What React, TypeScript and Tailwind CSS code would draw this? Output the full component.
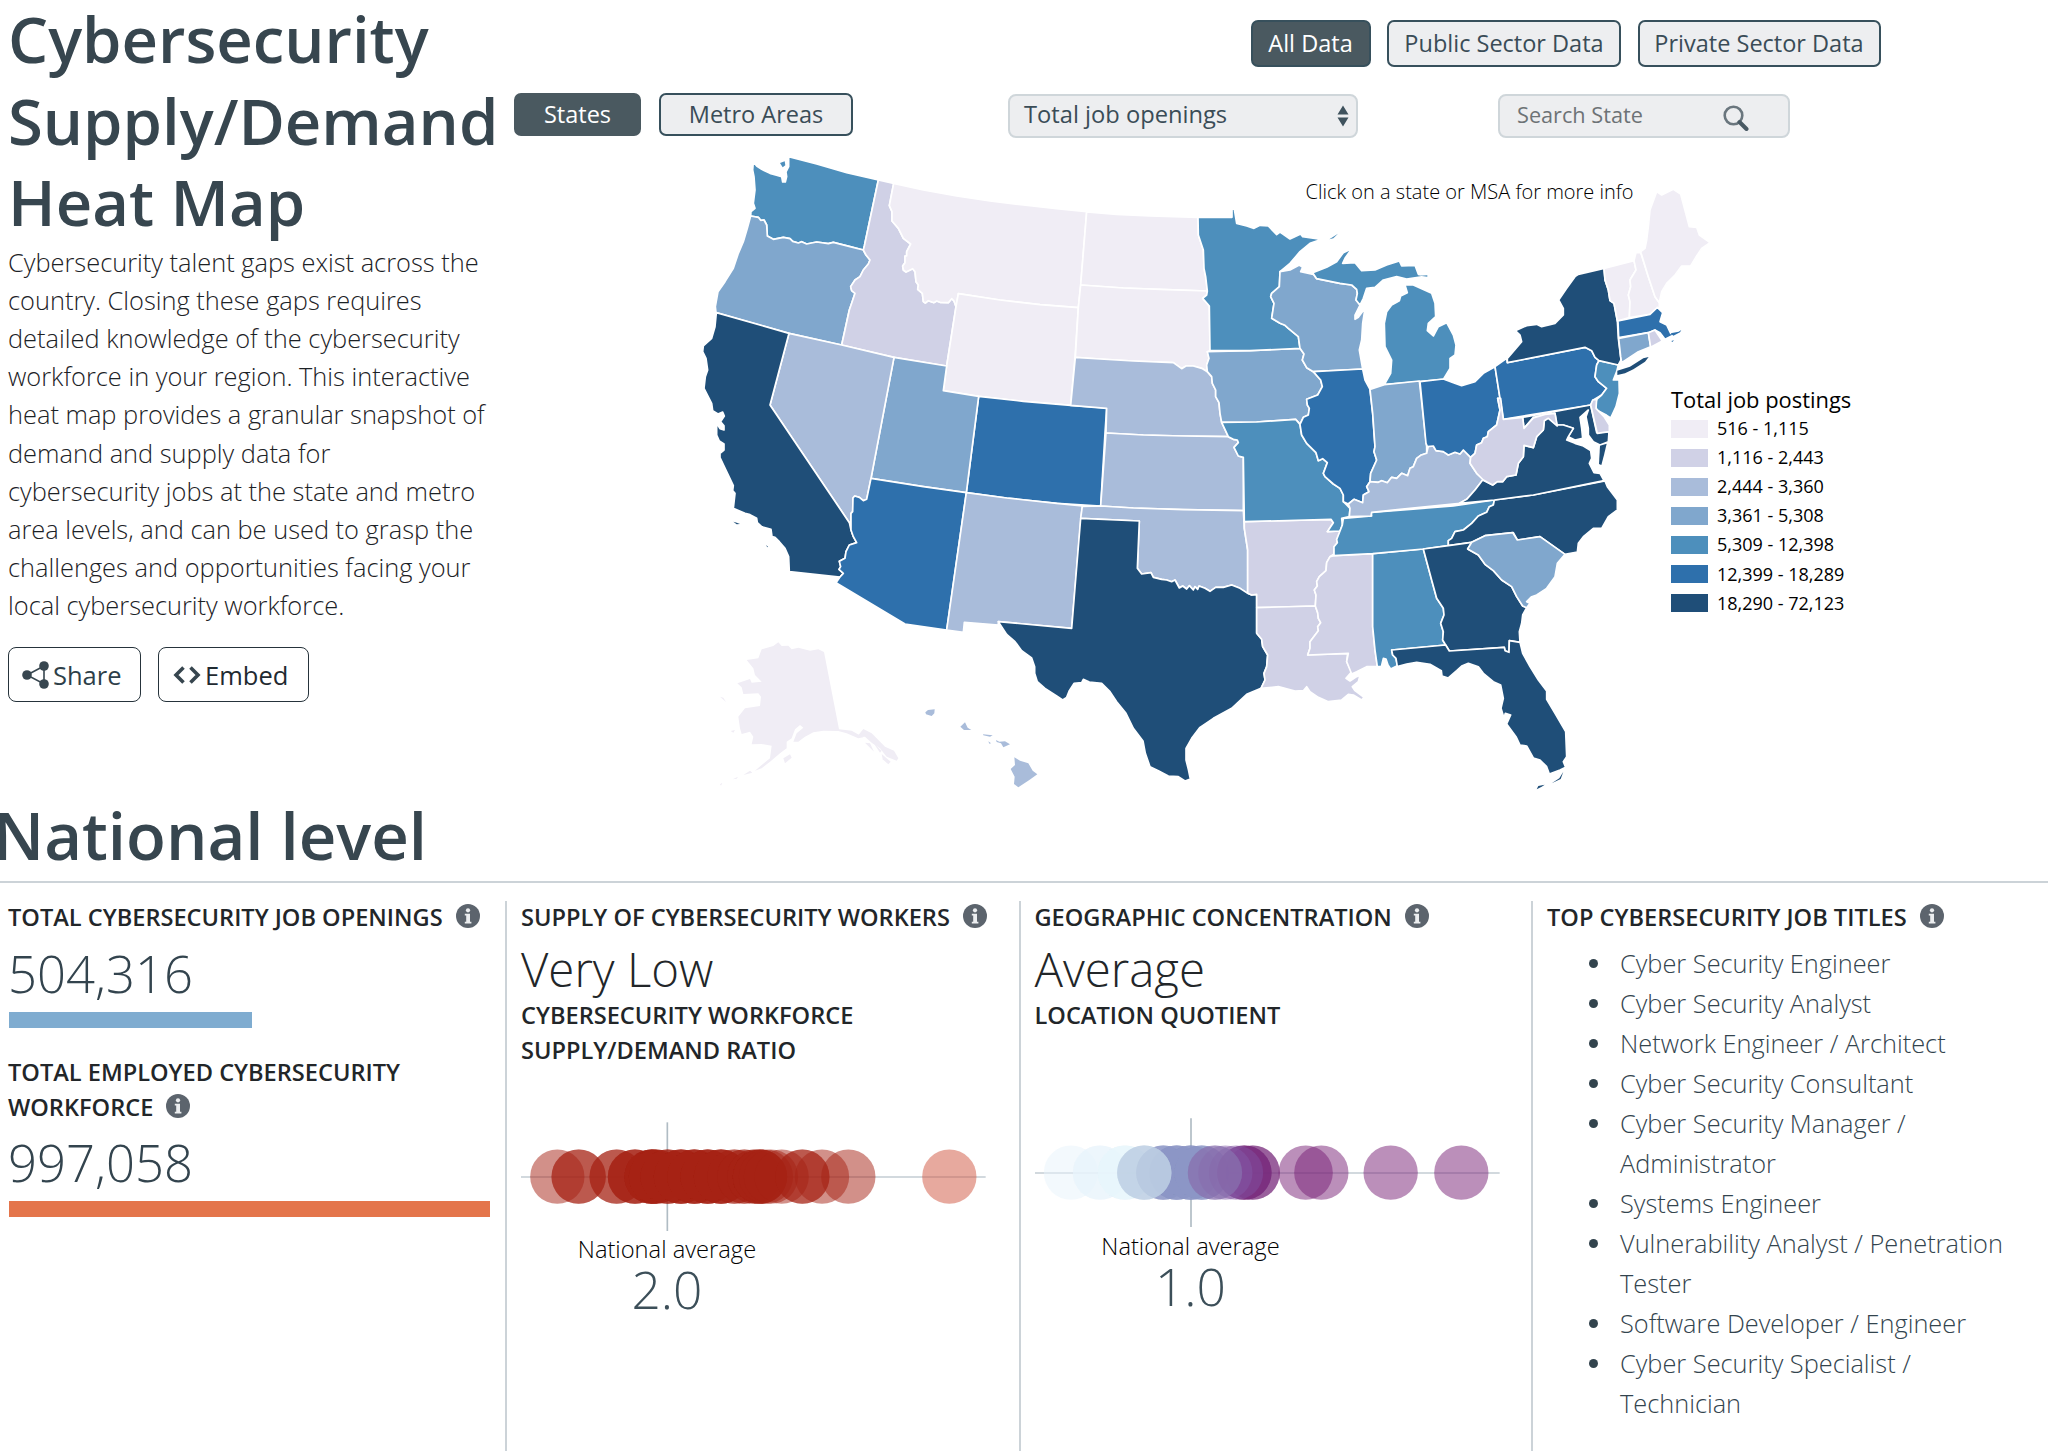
import React from "react";

const C = ["#f0edf5", "#d0d1e6", "#a9bcda", "#80a7cd", "#4d8fbc", "#2e70ac", "#1f4e78"];

type Shape = [level: number, points: string];

/* Shapes are grouped by map region; each region has its own local origin. */
const WEST: Shape[] = [
  [4, "190,66 200,78 215,88 240,100 262,106 275,110 278,126 286,126 290,110 288,96 296,80 296,50 380,72 470,98 565,120 523,318 520,330 480,320 430,307 415,311 380,306 350,312 335,305 325,309 308,304 300,296 280,292 250,298 232,288 230,255 222,240 212,241 205,232 182,228 183,215 195,205 190,190 195,150 192,110 188,90"],
  [3, "182,228 205,232 212,241 222,240 230,255 232,288 250,298 280,292 300,296 308,304 325,309 335,305 350,312 380,306 415,311 430,307 480,320 520,330 528,345 540,360 535,372 520,390 510,410 495,420 482,440 485,452 495,460 485,490 478,510 455,615 297,580 78,518 76,500 84,455 105,425 130,385 145,340 160,305 172,265"],
  [1, "565,120 611,130 598,197 606,215 606,243 625,265 640,295 662,312 650,335 650,348 645,348 645,368 638,378 640,390 648,396 668,386 675,395 678,425 685,435 683,448 697,460 700,485 706,489 715,482 732,488 740,483 750,487 775,488 785,476 792,483 798,500 770,678 612,652 455,615 478,510 485,490 495,460 485,452 482,440 495,420 510,410 520,390 535,372 540,360 528,345 520,330 523,318"],
  [0, "611,130 700,150 800,168 900,183 1000,195 1100,206 1190,215 1172,436 1165,503 1050,494 930,480 805,461 798,500 792,483 785,476 775,488 750,487 740,483 732,488 715,482 706,489 700,485 697,460 683,448 685,435 678,425 675,395 668,386 648,396 640,390 638,378 645,368 645,348 650,348 650,335 662,312 640,295 625,265 606,243 606,215 598,197"],
  [0, "805,461 930,480 1050,494 1165,503 1155,653 1142,796 1000,784 866,769 760,752 770,678 798,500"],
  [5, "866,769 1000,784 1142,796 1250,804 1245,879 1232,1098 1100,1090 950,1074 829,1058"],
  [3, "612,652 770,678 760,752 866,769 829,1058 700,1040 543,1015"],
  [2, "297,580 455,615 612,652 543,1015 530,1078 520,1082 508,1072 494,1068 489,1074 488,1115 483,1120 483,1145 478,1148 240,795"],
  [6, "79,518 297,580 240,795 478,1148 483,1170 490,1190 500,1208 478,1215 468,1235 465,1255 448,1264 452,1280 447,1288 460,1300 450,1311 298,1295 296,1250 285,1225 268,1205 255,1192 246,1190 243,1168 215,1160 202,1148 200,1135 180,1124 165,1120 130,1105 135,1060 128,1052 130,1037 110,995 90,953 90,940 102,930 102,912 88,903 80,885 80,850 90,866 102,870 102,857 92,845 103,828 98,816 84,822 68,812 65,790 42,745 46,710 53,690 48,655 38,635 40,618 65,595 75,560"],
  [5, "543,1015 700,1040 829,1058 770,1470 645,1452 438,1328 450,1311 460,1300 447,1288 452,1280 448,1264 465,1255 468,1235 478,1215 500,1208 490,1190 483,1170 483,1120 488,1115 489,1074 494,1068 508,1072 520,1082 530,1078"],
  [2, "829,1058 950,1074 1100,1090 1177,1098 1173,1135 1145,1465 925,1445 925,1455 823,1447 820,1477 770,1470"],
];

const CENTRAL: Shape[] = [
  [0, "110,96 200,103 300,108 444,112 445,165 455,195 460,210 462,265 467,290 472,333 350,329 220,324 92,315"],
  [0, "92,315 220,324 350,329 472,333 470,345 458,355 478,378 480,512 472,515 477,535 470,555 472,575 455,565 430,558 408,558 395,566 370,548 250,543 150,537 76,532 85,383"],
  [2, "76,532 150,537 250,543 370,548 395,566 408,558 430,558 455,565 472,575 485,590 487,610 497,630 497,650 507,668 510,700 515,727 535,770 400,768 280,765 168,759 170,685 62,676"],
  [2, "168,759 280,765 400,768 535,770 550,778 562,780 565,788 552,802 565,828 580,832 580,992 400,989 250,984 152,978"],
  [2, "97,979 152,978 250,984 400,989 580,992 583,1045 593,1110 593,1240 570,1225 545,1215 520,1222 497,1222 480,1234 465,1225 447,1218 443,1228 435,1220 430,1230 418,1217 410,1227 398,1218 388,1224 375,1200 365,1205 350,1200 335,1198 310,1192 303,1178 275,1182 262,1165 268,1023 92,1015"],
  [6, "92,1015 268,1023 262,1165 275,1182 303,1178 310,1192 335,1198 350,1200 365,1205 375,1200 388,1224 398,1218 410,1227 418,1217 430,1230 435,1220 443,1228 447,1218 465,1225 480,1234 497,1222 520,1222 545,1215 570,1225 593,1240 605,1245 620,1243 620,1360 635,1378 638,1400 653,1425 650,1460 642,1480 645,1500 633,1525 590,1543 545,1585 490,1615 450,1642 425,1675 408,1705 408,1740 415,1768 421,1797 405,1803 385,1790 355,1788 325,1772 300,1760 286,1720 279,1683 250,1645 228,1600 200,1565 180,1535 155,1510 118,1506 100,1498 95,1508 72,1510 58,1532 50,1552 38,1560 20,1548 -15,1525 -38,1505 -46,1480 -46,1460 -55,1434 -85,1412 -105,1385 -130,1363 -155,1325 65,1345"],
  [1, "583,1025 700,1022 843,1018 850,1028 832,1055 870,1053 868,1072 860,1078 862,1088 852,1100 852,1122 840,1130 830,1148 828,1172 808,1190 800,1205 802,1218 793,1230 798,1245 796,1278 620,1283 620,1243 605,1245 593,1240 593,1110 583,1045"],
  [1, "620,1283 796,1278 803,1298 805,1315 812,1328 803,1340 805,1352 780,1385 780,1405 773,1425 893,1420 890,1445 905,1475 888,1495 900,1503 920,1490 930,1486 925,1505 907,1520 915,1532 942,1552 935,1560 910,1545 895,1543 875,1560 835,1565 805,1552 780,1535 770,1520 760,1532 735,1533 685,1520 633,1525 645,1500 642,1480 650,1460 653,1425 638,1400 635,1378 620,1360"],
  [3, "472,515 600,512 750,505 762,522 757,540 770,563 790,575 812,600 817,620 803,645 770,658 772,675 778,685 775,705 760,712 750,733 737,718 620,726 515,727 510,700 507,668 497,650 497,630 487,610 485,590 472,575 470,555 477,535"],
  [4, "515,727 620,726 737,718 750,733 755,765 770,790 798,818 805,842 818,836 832,848 820,880 825,890 850,912 870,925 880,945 880,965 890,975 900,985 898,1010 875,1015 877,1035 870,1053 832,1055 850,1028 843,1018 583,1025 580,832 565,828 552,802 565,788 562,780 550,778 535,770"],
  [4, "444,112 546,112 546,86 553,88 560,130 590,138 612,145 630,136 655,138 680,164 690,156 720,177 752,162 758,170 815,178 780,190 750,215 720,250 690,275 688,320 665,340 662,350 672,370 665,415 690,430 705,436 715,445 745,470 750,505 600,512 480,512 478,378 458,355 470,345 472,333 467,290 462,265 460,210 455,195 445,165"],
  [3, "690,275 720,270 748,255 758,262 752,275 790,283 800,296 870,310 905,315 920,328 922,340 918,360 930,375 915,405 915,418 925,412 945,385 938,430 935,480 928,510 938,567 790,575 770,563 757,540 762,522 750,505 745,470 715,445 705,436 690,430 665,415 672,370 662,350 665,340 688,320"],
  [4, "788,278 830,262 860,245 880,218 905,206 885,235 878,250 915,248 935,272 975,270 1010,255 1048,243 1055,258 1095,256 1105,283 1130,288 1070,297 1040,290 1000,300 975,322 950,325 940,355 930,375 918,360 922,340 920,328 905,315 870,310 800,296"],
  [4, "1065,315 1090,315 1145,340 1155,370 1157,410 1135,430 1132,452 1150,468 1165,440 1190,428 1210,465 1218,495 1215,525 1200,535 1200,565 1180,598 1108,605 1003,614 1022,580 1025,540 1005,500 1003,430 1010,395 1025,375 1048,362 1052,348 1072,338"],
  [5, "790,575 938,567 945,600 960,628 968,700 975,800 972,815 980,840 962,880 960,905 950,920 957,935 940,945 938,968 912,958 895,972 880,965 880,945 870,925 850,912 825,890 820,880 832,848 818,836 805,842 798,818 770,790 755,765 750,733 760,712 775,705 778,685 772,675 770,658 803,645 817,620 812,600"],
  [3, "960,628 1003,614 1108,603 1130,800 1130,820 1112,826 1100,835 1090,860 1080,865 1073,887 1055,880 1040,895 1025,892 1012,908 995,902 985,907 960,905 962,880 980,840 972,815 975,800 968,700"],
];

const EAST: Shape[] = [
  [2, "-152,1010 -150,985 -155,972 -138,958 -112,968 -110,945 -93,935 -100,920 -90,905 -65,907 -55,902 -38,908 -25,892 -10,895 5,880 23,887 30,865 40,860 50,835 62,826 80,820 85,798 100,798 108,812 130,815 145,825 165,817 180,822 190,810 212,832 210,850 230,880 250,898 225,930 200,958 180,970 0,988 -85,997 -87,1008"],
  [5, "60,605 130,597 160,608 185,617 225,605 250,580 285,560 300,655 293,655 300,690 290,735 265,755 262,770 250,775 245,788 230,795 225,820 212,832 190,810 180,822 165,817 145,825 130,815 108,812 100,798 82,800 78,790"],
  [5, "285,560 320,535 322,548 555,502 575,512 585,532 597,542 590,555 585,590 595,605 620,625 605,645 580,660 572,675 310,718"],
  [4, "597,542 655,555 650,575 640,600 657,600 658,640 648,680 632,714 620,706 590,690 586,675 590,658 605,645 620,625 595,605 585,590 590,555"],
  [6, "322,535 365,485 360,465 346,452 380,437 410,433 425,440 465,430 490,405 490,385 476,360 500,325 525,290 535,283 612,265 615,300 625,330 630,362 642,370 652,422 655,475 663,540 655,555 597,542 585,532 575,512 555,502 322,548"],
  [0, "612,265 702,242 708,270 690,300 692,320 685,345 690,365 688,413 652,423 642,370 630,362 625,330 615,300"],
  [0, "702,242 708,218 722,218 745,290 765,350 778,368 778,382 768,390 750,403 688,413 690,365 685,345 692,320 690,300 708,270"],
  [0, "722,215 735,205 740,180 745,140 750,90 770,35 785,45 820,28 842,42 868,140 890,142 898,165 930,188 905,205 890,228 872,258 845,258 825,285 800,310 785,335 778,368 765,350 745,290"],
  [5, "654,423 750,403 772,382 788,398 780,425 800,435 812,460 835,458 815,468 795,478 780,458 765,450 745,458 656,473"],
  [3, "656,475 745,458 752,500 715,515 665,548 662,530"],
  [1, "745,458 765,450 787,483 752,502"],
  [6, "368,712 572,675 590,758 627,755 625,785 600,795 580,785 565,765 565,745 558,710 565,690 540,712 545,745 548,775 525,780 505,770 520,745 490,735 470,735 465,700 435,705 400,712 372,745"],
  [1, "572,675 578,660 590,658 588,685 612,710 628,735 628,755 592,760"],
  [6, "178,970 283,960 400,945 612,902 600,880 582,878 568,850 575,835 572,812 550,798 525,790 500,780 505,770 520,745 490,735 470,735 445,712 433,722 430,750 410,770 400,803 372,796 370,830 355,850 348,885 320,890 308,905 292,905 278,915 248,900 225,930 200,958"],
  [1, "293,655 302,655 310,718 368,712 372,745 400,714 435,703 465,700 472,738 445,715 433,722 430,750 410,770 400,803 372,796 370,830 355,850 348,885 320,890 308,905 292,905 278,915 250,900 230,880 210,850 212,832 225,820 230,795 245,788 250,775 262,770 265,755 290,735 300,690"],
];

const SOUTH: Shape[] = [
  [1, "552,227 668,221 668,440 675,510 682,560 650,560 620,575 605,582 590,545 595,520 473,525 480,505 480,485 505,452 503,440 512,428 505,415 503,398 496,378 498,345 493,330 502,318 500,305 508,290 528,272 530,248 540,230"],
  [4, "668,221 820,207 845,300 860,355 880,385 882,405 872,430 880,455 878,480 887,495 725,510 728,525 738,535 742,557 722,567 714,555 708,537 700,535 694,560 682,560 675,510 668,440"],
  [4, "580,115 665,108 663,97 780,88 910,78 1033,60 1030,75 1018,80 1010,97 985,108 965,130 940,150 915,155 905,175 895,182 895,197 820,207 668,221 552,227 552,200 562,188 560,178 570,153 577,135"],
  [6, "1033,60 1150,45 1365,3 1372,20 1402,60 1402,90 1375,110 1355,145 1330,145 1300,170 1285,190 1282,216 1245,223 1170,170 1102,180 1090,158 1005,167 965,187 895,197 895,182 905,175 915,155 940,150 965,130 985,108 1010,97 1018,80 1030,75"],
  [6, "820,207 895,197 965,187 953,207 985,225 1005,253 1030,272 1055,300 1085,320 1100,350 1118,378 1130,383 1118,405 1115,430 1108,455 1110,487 1078,482 1077,517 1065,512 1063,502 898,513 887,495 878,480 880,455 872,430 882,405 880,385 860,355 845,300"],
  [3, "965,187 1005,167 1088,158 1102,180 1170,170 1245,223 1222,250 1215,290 1190,325 1160,345 1145,350 1130,365 1140,370 1130,383 1118,378 1100,350 1085,320 1055,300 1030,272 1005,253 985,225 953,207"],
  [6, "725,510 887,495 898,513 1063,502 1065,512 1077,517 1078,482 1110,487 1118,520 1140,560 1165,600 1190,633 1190,658 1215,700 1247,755 1250,830 1240,845 1247,862 1230,870 1198,882 1190,860 1170,840 1150,834 1130,798 1110,795 1098,770 1070,732 1082,705 1066,700 1062,714 1053,685 1060,655 1052,615 1030,605 1000,580 985,560 955,550 935,558 920,572 895,594 876,588 874,572 840,553 800,547 770,552 742,560 738,535 728,525"],
];

/* Islands and detached territory, drawn without a border. */
const ISLES: { at: string; shapes: Shape[] }[] = [
  {
    at: "translate(0 1380)",
    shapes: [
      [0, "170,180 205,175 215,148 250,138 265,127 275,138 295,137 305,148 325,143 360,152 385,148 402,156 447,388 485,392 520,412 505,415 470,400 445,393 400,392 370,397 345,410 325,425 310,425 320,400 340,383 330,375 315,388 305,415 290,425 290,445 270,460 240,485 215,505 195,512 215,495 240,475 245,437 215,432 185,433 190,410 180,395 155,402 150,385 145,350 165,325 210,318 213,290 205,280 160,282 155,262 142,250 180,237 185,248 215,245 195,225 190,205"],
      [0, "280,475 300,463 305,473 285,490"],
      [0, "500,412 520,387 545,400 585,440 612,452 625,475 620,482 590,470 570,445 545,428 525,410"],
      [0, "525,428 540,430 552,455"],
      [0, "550,428 575,452 570,458"],
      [0, "575,462 602,485 595,493 578,478"],
      [0, "160,525 180,512 187,518"],
      [0, "90,553 97,548 93,557"],
      [0, "128,538 144,530 140,536"],
      [0, "122,393 135,390 130,398"],
      [0, "90,290 100,293 108,306"],
      [2, "706,337 714,330 734,328 733,340 725,348 708,343"],
      [2, "811,380 825,367 833,383 844,390 822,390"],
      [2, "879,403 908,406 900,410 880,406"],
      [2, "895,424 903,430 898,431"],
      [2, "918,420 928,425 945,424 960,433 940,442 933,430 920,426"],
      [2, "973,472 990,482 1015,490 1028,512 1042,523 1018,540 985,562 972,552 974,530 962,507 975,495"],
      [6, "130,-235 140,-232 150,-228 140,-227"],
      [6, "228,-165 234,-160 232,-158"],
      [4, "270,-1311 284,-1316 286,-1304 278,-1298"],
    ],
  },
  {
    at: "translate(2130 120)",
    shapes: [
      [6, "652,572 690,560 730,535 746,531 735,545 700,568 675,580 652,585"],
      [6, "600,797 620,791 612,825 604,855 597,852"],
      [5, "812,460 836,455 844,450 840,457 820,467"],
      [5, "814,483 822,481 817,486"],
      [4, "60,287 82,286 82,290"],
    ],
  },
  {
    at: "translate(1080 120)",
    shapes: [[4, "838,178 864,161 850,175"]],
  },
  {
    at: "translate(1380 1020)",
    shapes: [
      [6, "1160,928 1165,918 1184,914 1175,920"],
      [6, "1205,910 1228,895 1240,875 1232,897"],
    ],
  },
];

const REGIONS: { at: string; shapes: Shape[] }[] = [
  { at: "translate(0 0)", shapes: WEST },
  { at: "translate(1080 120)", shapes: CENTRAL },
  { at: "translate(1380 1020)", shapes: SOUTH },
  { at: "translate(2130 120)", shapes: EAST },
];

function UsMap() {
  return (
    <svg className="ml-[184px] block h-[660px] w-[1050px]" viewBox="0 0 3150 1980">
      {REGIONS.map((r) => (
        <g key={r.at} transform={r.at} stroke="#fff" strokeWidth={5} strokeLinejoin="round">
          {r.shapes.map(([level, pts], i) => (
            <polygon key={i} points={pts} fill={C[level]} />
          ))}
        </g>
      ))}
      {ISLES.map((r) => (
        <g key={r.at} transform={r.at}>
          {r.shapes.map(([level, pts], i) => (
            <polygon key={i} points={pts} fill={C[level]} />
          ))}
        </g>
      ))}
    </svg>
  );
}

const LEGEND: [string, string][] = [
  ["bg-[#f0edf5]", "516 - 1,115"],
  ["bg-[#d0d1e6]", "1,116 - 2,443"],
  ["bg-[#a9bcda]", "2,444 - 3,360"],
  ["bg-[#80a7cd]", "3,361 - 5,308"],
  ["bg-[#4d8fbc]", "5,309 - 12,398"],
  ["bg-[#2e70ac]", "12,399 - 18,289"],
  ["bg-[#1f4e78]", "18,290 - 72,123"],
];

function Info() {
  return (
    <svg className="ml-[13px] inline-block size-6 align-[-2px]" viewBox="0 0 24 24">
      <circle cx="12" cy="12" r="12" fill="#5c646d" />
      <circle cx="12" cy="6.3" r="2.1" fill="#eceef0" />
      <path d="M8.8 9.8h5.2v8h1.4v1.8H8.8v-1.8h1.4v-6.2H8.8z" fill="#eceef0" />
    </svg>
  );
}

function Heading({ children, info = false }: { children: React.ReactNode; info?: boolean }) {
  return (
    <h3 className="text-[23.6px] leading-[34.3px] font-semibold text-[#222629]">
      {children}
      {info && <Info />}
    </h3>
  );
}

type Dot = [x: number, fill: string, count: number];

const RED = "#a52114";
const SUPPLY: Dot[] = [
  [109, RED, 1], [173, RED, 2], [287, RED, 2], [342, RED, 3], [392, RED, 5], [405, RED, 3],
  [440, RED, 3], [480, RED, 4], [520, RED, 4], [560, RED, 4], [600, RED, 4], [640, RED, 2],
  [670, RED, 2], [700, RED, 2], [717, RED, 4], [735, RED, 1], [750, RED, 1], [782, RED, 1],
  [844, RED, 2], [903, RED, 1], [982, RED, 1], [1285, "#d0533d", 1],
];

const GEO: Dot[] = [
  [108, "#e7f3fb", 1], [195, "#e7f4fc", 2], [270, "#e8f5fc", 3],
  [385, "#8c96c6", 3], [425, "#8c96c6", 4], [467, "#8c96c6", 4], [500, "#8c96c6", 3],
  [328, "#bdd0e4", 3],
  [653, "#772a7c", 2], [628, "#772a7c", 3],
  [571, "#8560ab", 1], [603, "#7f50a0", 1], [540, "#8870ae", 2],
  [812, "#772076", 1], [859, "#772076", 1], [1067, "#772076", 1], [1279, "#772076", 1],
];

function DotStrip({ dots, avg }: { dots: Dot[]; avg: number }) {
  return (
    <svg className="block h-[124px] w-[468px]" viewBox="0 0 1404 372">
      <path d="M0 201H1394" stroke="#c3ccd3" strokeWidth="5" />
      <path d={`M${avg} 37V363`} stroke="#b0bcc4" strokeWidth="5" />
      {dots.map(([x, fill, n], i) =>
        Array.from({ length: n }, (_, k) => (
          <circle key={`${i}-${k}`} cx={x} cy="200" r="81.5" fill={fill} fillOpacity=".5" />
        )),
      )}
    </svg>
  );
}

function Average({ value }: { value: string }) {
  return (
    <div className="text-center font-light">
      <div className="text-[23.7px] leading-[30px] text-black">National average</div>
      <div className="text-[51.5px] leading-[50px] text-[#3c4f59]">{value}</div>
    </div>
  );
}

const TITLES = [
  "Cyber Security Engineer",
  "Cyber Security Analyst",
  "Network Engineer / Architect",
  "Cyber Security Consultant",
  "Cyber Security Manager / Administrator",
  "Systems Engineer",
  "Vulnerability Analyst / Penetration Tester",
  "Software Developer / Engineer",
  "Cyber Security Specialist / Technician",
];

const BTN = "flex items-center justify-center rounded-[7px] border-2 text-[23.5px]";

export default function App() {
  return (
    <div className="h-[1451px] w-[2048px] overflow-hidden bg-white font-['Open_Sans',sans-serif]">
      <div className="flex h-[794px]">
        <aside className="w-[506px] shrink-0 pl-2">
          <h1 className="-mt-[2px] text-[63.4px] leading-[81.6px] font-semibold whitespace-nowrap text-[#37464f]">
            Cybersecurity
            <br />
            Supply/Demand
            <br />
            Heat Map
          </h1>
          <p className="text-[25.4px] leading-[38.15px] font-light whitespace-nowrap text-[#1c2226]">
            Cybersecurity talent gaps exist across the
            <br />
            country. Closing these gaps requires
            <br />
            detailed knowledge of the cybersecurity
            <br />
            workforce in your region. This interactive
            <br />
            heat map provides a granular snapshot of
            <br />
            demand and supply data for
            <br />
            cybersecurity jobs at the state and metro
            <br />
            area levels, and can be used to grasp the
            <br />
            challenges and opportunities facing your
            <br />
            local cybersecurity workforce.
          </p>
          <div className="mt-[23px] flex gap-[17px]">
            <button className="flex h-[55px] w-[133px] items-center rounded-lg border-[1.5px] border-[#26333b] bg-white pl-[13px] text-[25.5px] text-[#2e3f49]">
              <svg className="mr-[3px] h-7 w-7" viewBox="0 0 28 28">
                <path d="M22 5L5 14l17 9V5" fill="none" stroke="#37464f" strokeWidth="1.6" />
                <circle cx="22" cy="5" r="4.8" fill="#37464f" />
                <circle cx="5" cy="14" r="4.8" fill="#37464f" />
                <circle cx="22" cy="23" r="4.8" fill="#37464f" />
              </svg>
              Share
            </button>
            <button className="flex h-[55px] w-[151px] items-center rounded-lg border-[1.5px] border-[#26333b] bg-white pl-[14px] text-[25.5px] text-[#1f2a31]">
              <svg className="mr-1 h-7 w-7" viewBox="0 0 28 28" fill="none" stroke="#37464f" strokeWidth="3.6">
                <path d="M10.5 6.5L3 14l7.5 7.5M17.5 6.5L25 14l-7.5 7.5" />
              </svg>
              Embed
            </button>
          </div>
        </aside>

        <main className="relative flex-1">
          <div className="flex h-[67px] gap-[16.5px] pt-5 pl-[744.5px]">
            <button className={`${BTN} w-[120px] border-[#37505c] bg-[#4a5960] text-white`}>All Data</button>
            <button className={`${BTN} w-[234px] border-[#37505c] bg-[#edeef0] text-[#3a4c57]`}>
              Public Sector Data
            </button>
            <button className={`${BTN} w-[243px] border-[#37505c] bg-[#edeef0] text-[#3a4c57]`}>
              Private Sector Data
            </button>
          </div>
          <div className="flex h-[73px] items-start pt-[26px] pl-2">
            <button className={`${BTN} h-[43px] w-[127px] border-[#4a5960] bg-[#4a5960] pt-px text-white`}>States</button>
            <button className={`${BTN} ml-[18px] h-[43px] w-[194px] border-[#37505c] bg-[#edeef0] pt-px text-[#3a4c57]`}>
              Metro Areas
            </button>
            <div className="mt-px ml-[155px] flex h-[44px] w-[350px] items-center justify-between rounded-lg border-2 border-[#cfd6da] bg-[#edeef0] pr-[7px] pb-[2px] pl-[14px] text-[23.7px] text-[#3a4c57]">
              Total job openings
              <svg className="mt-px h-[22px] w-3" viewBox="0 0 12 22" fill="#3f525d">
                <path d="M6 0.500l5.500 9H.5zM6 21.500l5.500-9H.5z" />
              </svg>
            </div>
            <div className="mt-px ml-[140px] flex h-[44px] w-[292px] items-center rounded-lg border-2 border-[#cfd6da] bg-[#edeef0] pb-[2px] pl-[17px] text-[21.7px] text-[#6d7376]">
              <span className="w-[206px]">Search State</span>
              <svg className="mt-[5px] h-[26px] w-[26px]" viewBox="0 0 26 26" fill="none">
                <circle cx="10.500" cy="10.500" r="8.800" stroke="#6a767e" strokeWidth="2.600" />
                <path d="M16.500 17l7 7" stroke="#4a5a64" strokeWidth="4" strokeLinecap="round" />
              </svg>
            </div>
          </div>
          <UsMap />
          <div className="absolute top-[177px] left-[799.5px] text-[20px] leading-[30px] font-light whitespace-nowrap text-black">
            Click on a state or MSA for more info
          </div>
          <div className="absolute top-[385px] left-[1165px] text-black">
            <div className="text-[21.9px] leading-[29px] whitespace-nowrap">Total job postings</div>
            {LEGEND.map(([bg, label]) => (
              <div key={label} className="flex h-[29.100px] items-center gap-[9px] text-[18px] whitespace-nowrap">
                <span className={`h-[18px] w-[37px] ${bg}`} />
                {label}
              </div>
            ))}
          </div>
        </main>
      </div>

      <h2 className="-ml-[7px] h-[87px] text-[65.3px] leading-[82px] font-semibold text-[#37464f]">National level</h2>

      <div className="border-t-2 border-[#ccd3d8] pt-[18px]">
        <div className="grid h-[550px] grid-cols-[507px_514px_512px_1fr]">
          <section className="border-r-2 border-[#ccd3d8] pl-2">
            <div className="-mt-px">
              <Heading info>TOTAL CYBERSECURITY JOB OPENINGS</Heading>
            </div>
            <div className="mt-[10px] text-[50.8px] leading-[60px] font-light text-[#33444e]">504,316</div>
            <div className="mt-[8px] ml-px h-4 w-[243px] bg-[#7facd0]" />
            <div className="mt-[27px]">
              <Heading info>
                TOTAL EMPLOYED CYBERSECURITY
                <br />
                WORKFORCE
              </Heading>
            </div>
            <div className="mt-[9px] text-[50.8px] leading-[60px] font-light text-[#33444e]">997,058</div>
            <div className="mt-[8px] ml-px h-4 w-[481px] bg-[#e4754b]" />
          </section>

          <section className="border-r-2 border-[#ccd3d8] pl-[14px]">
            <div className="-mt-px">
              <Heading info>SUPPLY OF CYBERSECURITY WORKERS</Heading>
            </div>
            <div className="mt-[5px] mb-[-1px] text-[47.4px] leading-[60px] font-light text-[#222629]">Very Low</div>
            <Heading>
              CYBERSECURITY WORKFORCE
              <br />
              SUPPLY/DEMAND RATIO
            </Heading>
            <div className="mt-[43px]">
              <DotStrip dots={SUPPLY} avg={439} />
            </div>
            <div className="ml-[46px] w-[200px]">
              <Average value="2.0" />
            </div>
          </section>

          <section className="border-r-2 border-[#ccd3d8] pl-[13.5px]">
            <div className="-mt-px">
              <Heading info>GEOGRAPHIC CONCENTRATION</Heading>
            </div>
            <div className="mt-[5px] mb-[-1px] text-[47.4px] leading-[60px] font-light text-[#222629]">Average</div>
            <Heading>LOCATION QUOTIENT</Heading>
            <div className="mt-[73px]">
              <DotStrip dots={GEO} avg={468} />
            </div>
            <div className="mt-px ml-[56px] w-[200px]">
              <Average value="1.0" />
            </div>
          </section>

          <section className="pl-[14px]">
            <div className="-mt-px">
              <Heading info>TOP CYBERSECURITY JOB TITLES</Heading>
            </div>
            <ul className="mt-[9px] text-[25.35px] leading-[40px] font-light text-[#33444e]">
              {TITLES.map((t) => (
                <li key={t} className="flex w-[465px] pl-[42px]">
                  <span className="mt-[16px] mr-[22px] size-[9px] shrink-0 rounded-full bg-[#33444e]" />
                  {t}
                </li>
              ))}
            </ul>
          </section>
        </div>
      </div>
    </div>
  );
}
